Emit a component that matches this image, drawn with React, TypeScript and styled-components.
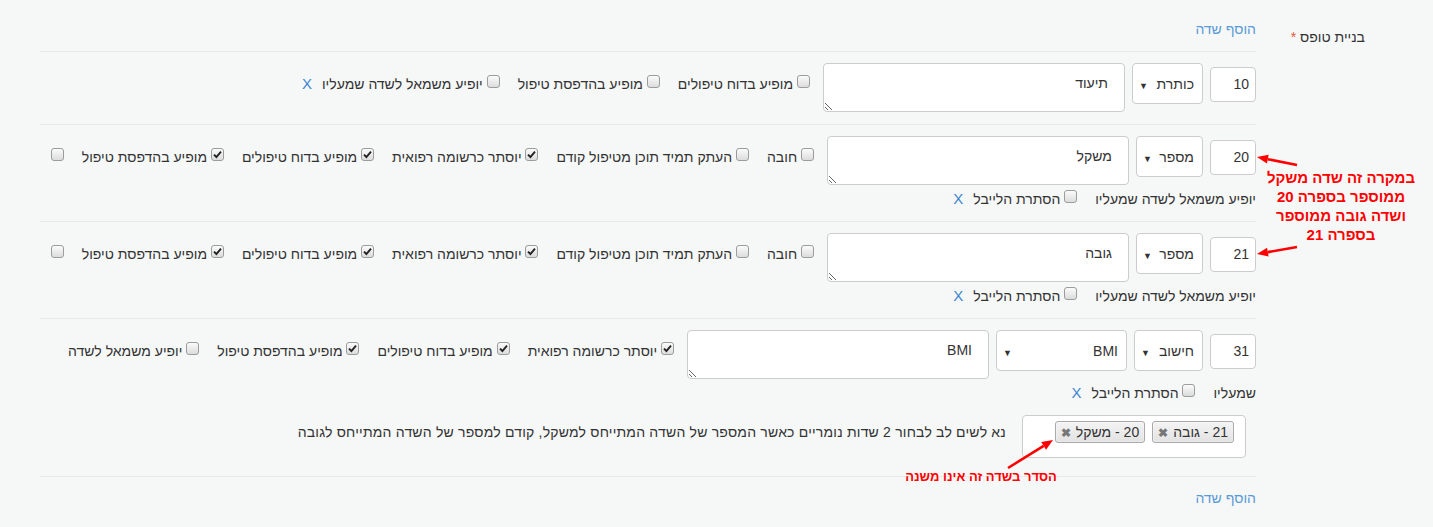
import React from 'react';
import styled, { createGlobalStyle } from 'styled-components';

const GlobalStyle = createGlobalStyle`
  html, body {
    margin: 0;
    padding: 0;
    background: #f6f8f8;
  }
  body {
    font-family: "Liberation Sans", Arial, sans-serif;
    font-size: 14px;
    color: #333;
  }
`;

const Page = styled.div`
  position: relative;
  width: 1433px;
  height: 527px;
  display: flex;
  direction: rtl;
  overflow: hidden;
`;

const LabelCol = styled.div`
  box-sizing: border-box;
  width: 177px;
  padding: 27px 68px 0 0;
  line-height: 20px;
  color: #333;
`;

const Star = styled.span`
  color: #e8553e;
`;

const ContentCol = styled.div`
  width: 1216px;
`;

const AddLink = styled.a`
  display: block;
  color: #5a9ad6;
  line-height: 20px;
  text-decoration: none;
`;

const TopBar = styled.div`
  padding: 19px 0 12px;
  border-bottom: 1px solid #e7eaea;
`;

const BottomBar = styled.div`
  padding: 11px 0;
`;

const FieldRow = styled.div`
  padding: 11px 0 12px;
  border-bottom: 1px solid #e7eaea;
  line-height: 20px;
  text-align: right;
`;

const NumberBox = styled.input`
  box-sizing: border-box;
  width: 46px;
  height: 35px;
  margin: 0 0 0 7px;
  padding: 6px;
  border: 1px solid #ccc;
  border-radius: 4px;
  background: #fff;
  font: 14px "Liberation Sans", Arial, sans-serif;
  color: #333;
  text-align: right;
  direction: rtl;
  vertical-align: baseline;
  outline: none;
`;

const SelectBox = styled.div<{ $w: number }>`
  display: inline-flex;
  justify-content: space-between;
  align-items: baseline;
  box-sizing: border-box;
  width: ${p => p.$w}px;
  height: 41px;
  margin-left: 7px;
  padding: 10px 8px 9px 6px;
  border: 1px solid #ccc;
  border-radius: 4px;
  background: #fff;
  line-height: 20px;
  vertical-align: baseline;
`;

const Caret = styled.span`
  font-size: 9px;
  color: #333;
`;

const NoteArea = styled.textarea`
  box-sizing: border-box;
  width: 302px;
  height: 49px;
  margin: 0 0 0 5px;
  padding: 9px 16px 4px 8px;
  border: 1px solid #ccc;
  border-radius: 4px;
  background: #fff;
  font: 14px/20px "Liberation Sans", Arial, sans-serif;
  color: #333;
  direction: rtl;
  vertical-align: top;
  overflow: hidden;
  outline: none;
`;

const Opt = styled.label`
  margin-inline-start: 8px;
  margin-inline-end: 10px;
`;

const Box = styled.span`
  display: inline-block;
  box-sizing: border-box;
  width: 13px;
  height: 13px;
  margin: 5px 0 1px;
  border: 1px solid #9c9c9c;
  border-radius: 3px;
  background: linear-gradient(#fbfbfb, #dcdcdc);
  vertical-align: baseline;
  position: relative;

  svg {
    position: absolute;
    left: 1px;
    top: 1px;
  }
`;

const Remove = styled.a`
  color: #3d85d0;
  font-size: 15px;
  text-decoration: none;
`;

const ExtraLine = styled.div`
  margin: 12px 0 6px;
  padding-right: 10px;
`;

const Hint = styled.span`
  letter-spacing: 0.2px;
`;

const MultiBox = styled.div`
  display: inline-block;
  box-sizing: border-box;
  width: 224px;
  height: 43px;
  margin-left: 16px;
  padding: 5px 11px 0 0;
  border: 1px solid #ccc;
  border-radius: 4px;
  background: #fff;
  vertical-align: baseline;
`;

const Tag = styled.span`
  display: inline-block;
  box-sizing: border-box;
  height: 22px;
  margin-left: 7px;
  padding: 0 5px;
  border: 1px solid #aaa;
  border-radius: 3px;
  background: linear-gradient(#f4f4f4, #e2e2e2);
  box-shadow: inset 0 0 2px #fff;
  line-height: 20px;
  color: #333;
`;

const TagX = styled.span`
  margin-right: 5px;
  font-size: 12px;
  font-weight: bold;
  color: #777;
`;

const Overlay = styled.svg`
  position: absolute;
  left: 0;
  top: 0;
  pointer-events: none;
`;

const Note = styled.div<{ $x: number; $y: number; $w: number; $size: number }>`
  position: absolute;
  left: ${p => p.$x}px;
  top: ${p => p.$y}px;
  width: ${p => p.$w}px;
  color: #f00;
  font-size: ${p => p.$size}px;
  font-weight: bold;
  line-height: 19px;
  text-align: center;
  direction: rtl;
`;

const Check = ({ on }: { on?: boolean }) => (
  <Box>
    {on && (
      <svg width="9" height="9" viewBox="0 0 9 9">
        <path d="M1 4.6 L3.4 7 L8 1.6" stroke="#222" strokeWidth="1.9" fill="none" />
      </svg>
    )}
  </Box>
);

const Option = ({ text, on }: { text: string; on?: boolean }) => (
  <Opt>
    <Check on={on} /> {text}
  </Opt>
);

type Field = {
  num: string;
  kind: string;
  kindW: number;
  label: string;
  calc?: boolean;
  opts: { t: string; on?: boolean }[];
};

const fullOpts = [
  { t: 'חובה' },
  { t: 'העתק תמיד תוכן מטיפול קודם' },
  { t: 'יוסתר כרשומה רפואית', on: true },
  { t: 'מופיע בדוח טיפולים', on: true },
  { t: 'מופיע בהדפסת טיפול', on: true },
  { t: 'יופיע משמאל לשדה שמעליו' },
  { t: 'הסתרת הלייבל' },
];

const fields: Field[] = [
  {
    num: '10',
    kind: 'כותרת',
    kindW: 71,
    label: 'תיעוד',
    opts: [
      { t: 'מופיע בדוח טיפולים' },
      { t: 'מופיע בהדפסת טיפול' },
      { t: 'יופיע משמאל לשדה שמעליו' },
    ],
  },
  { num: '20', kind: 'מספר', kindW: 67, label: 'משקל', opts: fullOpts },
  { num: '21', kind: 'מספר', kindW: 67, label: 'גובה', opts: fullOpts },
  {
    num: '31',
    kind: 'חישוב',
    kindW: 69,
    label: 'BMI',
    calc: true,
    opts: [
      { t: 'יוסתר כרשומה רפואית', on: true },
      { t: 'מופיע בדוח טיפולים', on: true },
      { t: 'מופיע בהדפסת טיפול', on: true },
      { t: 'יופיע משמאל לשדה שמעליו' },
      { t: 'הסתרת הלייבל' },
    ],
  },
];

const Arrow = ({ x1, y1, x2, y2 }: { x1: number; y1: number; x2: number; y2: number }) => {
  const a = Math.atan2(y2 - y1, x2 - x1);
  const len = 11;
  const w = 4.5;
  const bx = x2 - len * Math.cos(a);
  const by = y2 - len * Math.sin(a);
  const px = -Math.sin(a) * w;
  const py = Math.cos(a) * w;
  return (
    <g>
      <line x1={x1} y1={y1} x2={bx} y2={by} stroke="#f00" strokeWidth="2.6" />
      <polygon points={`${x2},${y2} ${bx + px},${by + py} ${bx - px},${by - py}`} fill="#f00" />
    </g>
  );
};

export default function App() {
  return (
    <>
      <GlobalStyle />
      <Page>
        <LabelCol>
          בניית טופס <Star>*</Star>
        </LabelCol>
        <ContentCol>
          <TopBar>
            <AddLink href="#">הוסף שדה</AddLink>
          </TopBar>
          {fields.map(f => (
            <FieldRow key={f.num}>
              <NumberBox readOnly value={f.num} />
              <SelectBox $w={f.kindW}>
                <span>{f.kind}</span>
                <Caret>▼</Caret>
              </SelectBox>
              {f.calc && (
                <SelectBox $w={131}>
                  <span>BMI</span>
                  <Caret>▼</Caret>
                </SelectBox>
              )}
              <NoteArea readOnly value={f.label} />
              {f.opts.map(o => (
                <Option key={o.t} text={o.t} on={o.on} />
              ))}
              <Remove href="#">X</Remove>
              {f.calc && (
                <ExtraLine>
                  <MultiBox>
                    <Tag>
                      21 - גובה<TagX>✖</TagX>
                    </Tag>
                    <Tag>
                      20 - משקל<TagX>✖</TagX>
                    </Tag>
                  </MultiBox>
                  <Hint>
                    נא לשים לב לבחור 2 שדות נומריים כאשר המספר של השדה המתייחס למשקל, קודם למספר של השדה המתייחס לגובה
                  </Hint>
                </ExtraLine>
              )}
            </FieldRow>
          ))}
          <BottomBar>
            <AddLink href="#">הוסף שדה</AddLink>
          </BottomBar>
        </ContentCol>

        <Overlay width="1433" height="527">
          <Arrow x1={1297} y1={165} x2={1257} y2={157} />
          <Arrow x1={1297} y1={247} x2={1257} y2={254} />
          <Arrow x1={1008} y1={468} x2={1053} y2={440} />
        </Overlay>
        <Note $x={1255} $y={168} $w={172} $size={15}>
          במקרה זה שדה משקל
          <br />
          ממוספר בספרה 20
          <br />
          ושדה גובה ממוספר
          <br />
          בספרה 21
        </Note>
        <Note $x={880} $y={467} $w={202} $size={13}>הסדר בשדה זה אינו משנה</Note>
      </Page>
    </>
  );
}
